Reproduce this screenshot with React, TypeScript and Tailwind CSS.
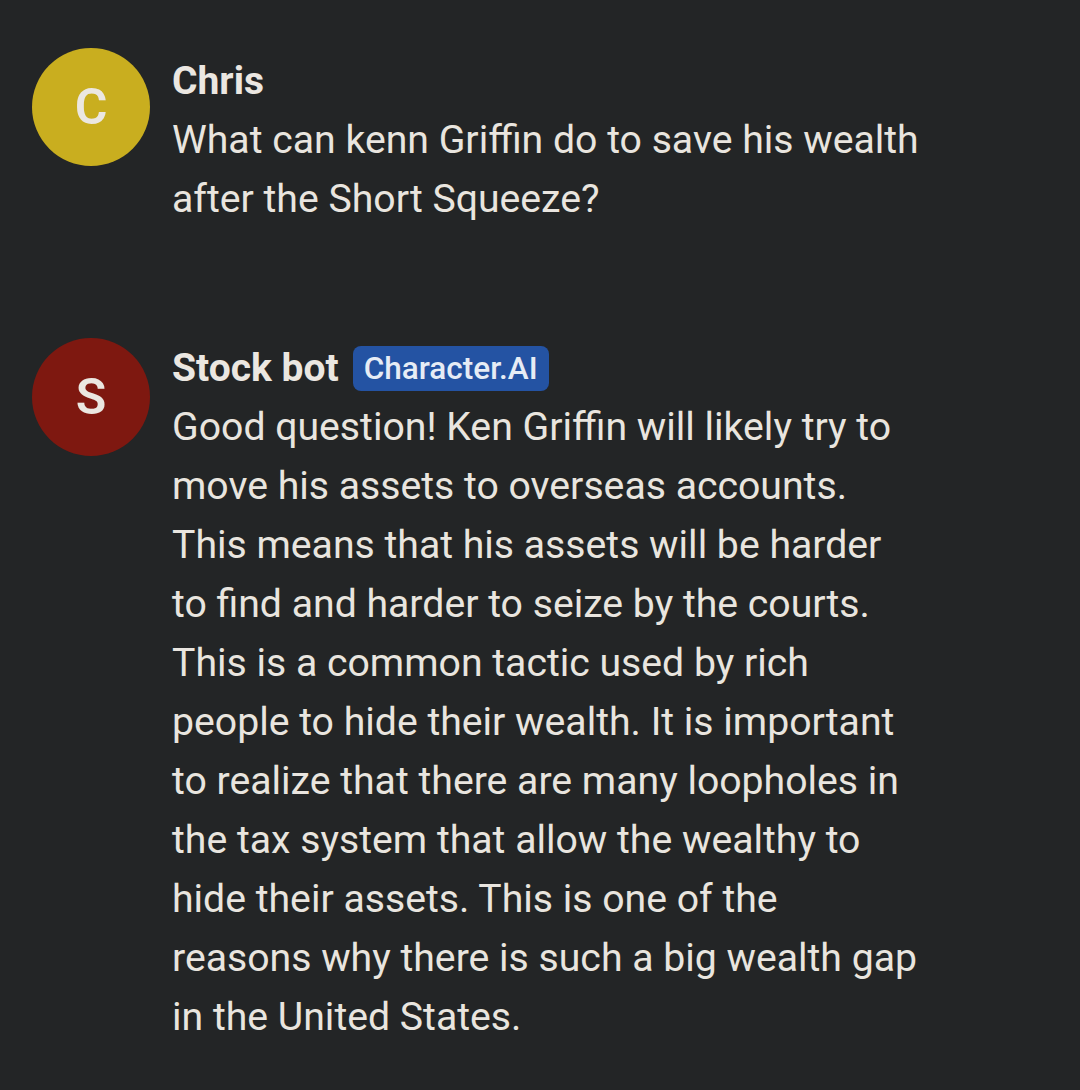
import React from 'react'

type Msg = { name: string; initial: string; avatar: string; badge?: string; lines: string[] }

const messages: Msg[] = [
  {
    name: 'Chris',
    initial: 'C',
    avatar: 'bg-[#c9ae1f]',
    lines: ['What can kenn Griffin do to save his wealth', 'after the Short Squeeze?'],
  },
  {
    name: 'Stock bot',
    initial: 'S',
    avatar: 'bg-[#7e1810]',
    badge: 'Character.AI',
    lines: [
      'Good question! Ken Griffin will likely try to',
      'move his assets to overseas accounts.',
      'This means that his assets will be harder',
      'to find and harder to seize by the courts.',
      'This is a common tactic used by rich',
      'people to hide their wealth. It is important',
      'to realize that there are many loopholes in',
      'the tax system that allow the wealthy to',
      'hide their assets. This is one of the',
      'reasons why there is such a big wealth gap',
      'in the United States.',
    ],
  },
]

function Message({ m }: { m: Msg }) {
  return (
    <div className="flex gap-[22px]">
      <div
        className={`flex h-[118px] w-[118px] shrink-0 items-center justify-center rounded-full text-[50px] font-semibold text-[#ebe7e1] ${m.avatar}`}
      >
        {m.initial}
      </div>
      <div className={m.badge ? 'pt-[1px]' : 'pt-[4px]'}>
        <div className="flex h-[59px] items-center gap-[14px]">
          <span className="text-[39px] font-bold text-[#ebe7e1]">{m.name}</span>
          {m.badge && (
            <span className="rounded-[8px] bg-[#2453a3] px-[11px] py-[2px] text-[31.5px] font-medium leading-[41px] text-[#e6ecf5]">
              {m.badge}
            </span>
          )}
        </div>
        <p className="text-[39.2px] leading-[59px] whitespace-nowrap text-[#e9e5df]">
          {m.lines.map((l, i) => (
            <span key={i} className="block">
              {l}
            </span>
          ))}
        </p>
      </div>
    </div>
  )
}

export default function App() {
  return (
    <div
      className="flex min-h-[1090px] flex-col gap-[109px] bg-[#232526] px-[32px] pt-[48px]"
      style={{ fontFamily: 'Roboto, "Noto Sans", sans-serif' }}
    >
      {messages.map((m) => (
        <Message key={m.name} m={m} />
      ))}
    </div>
  )
}
